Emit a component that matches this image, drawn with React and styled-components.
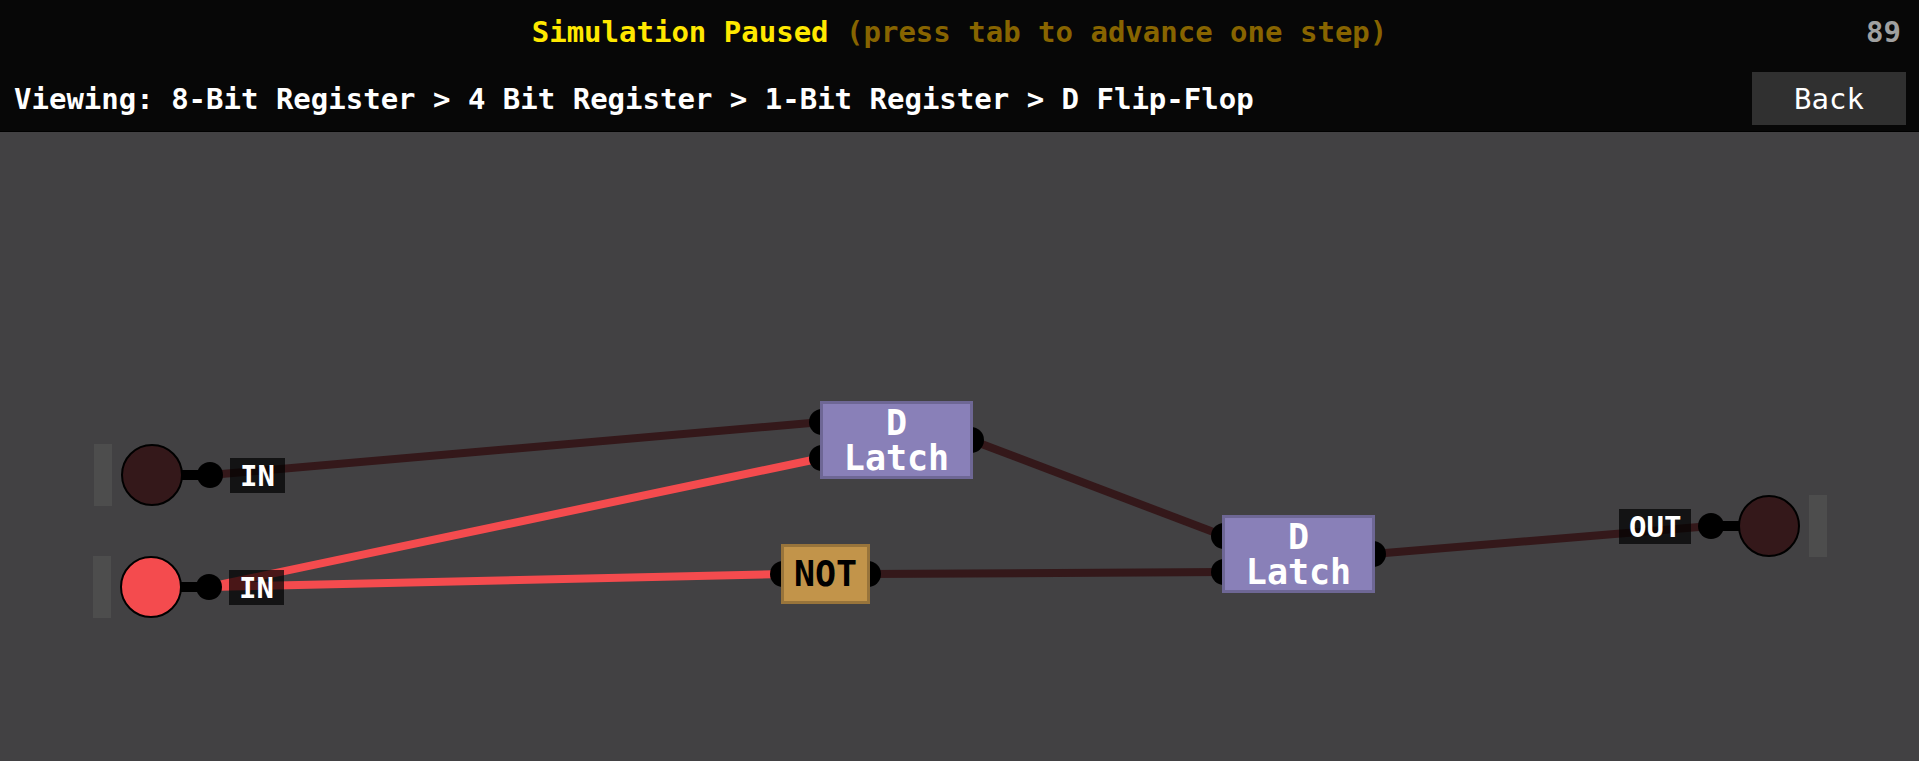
import React from "react";
import styled, { createGlobalStyle } from "styled-components";

const GlobalStyle = createGlobalStyle`
  *, *::before, *::after { box-sizing: border-box; }
  body {
    margin: 0;
    background: #424143;
    color: #ffffff;
    font: bold 29px/36px "DejaVu Sans Mono", "Liberation Mono", monospace;
  }
`;

const Page = styled.div`
  display: flex;
  flex-direction: column;
  min-height: 100vh;
`;

const Header = styled.header`
  background: #070707;
  border-bottom: 1px solid #000000;
`;

const StatusRow = styled.div`
  display: grid;
  grid-template-columns: 1fr auto 1fr;
  align-items: center;
  height: 64px;
  padding: 0 18px;
`;

const Status = styled.p`
  grid-column: 2;
  margin: 0;
  color: #ffe800;
  white-space: nowrap;
`;

const Hint = styled.span`
  color: #876400;
`;

const StepCount = styled.output`
  justify-self: end;
  color: #a0a0a0;
`;

const ViewRow = styled.nav`
  display: flex;
  align-items: center;
  justify-content: space-between;
  padding: 8px 13px 6px 14px;
`;

const Trail = styled.p`
  margin: 0;
  white-space: nowrap;
`;

const BackButton = styled.button`
  width: 154px;
  height: 53px;
  padding: 0;
  border: 0;
  background: #303030;
  color: #ffffff;
  font: inherit;
  font-weight: normal;
  cursor: pointer;
`;

const Canvas = styled.main`
  position: relative;
  flex: 1;
  min-height: 560px;
  overflow: hidden;
`;

const Wires = styled.svg`
  position: absolute;
  inset: 0;
  width: 100%;
  height: 100%;
  stroke-width: 8px;
`;

/* A part of the circuit, placed freely on the canvas. */
const Node = styled.div`
  position: absolute;
  left: ${(p) => p.$x}px;
  top: ${(p) => p.$y}px;
  display: flex;
  flex-direction: ${(p) => (p.$flip ? "row-reverse" : "row")};
  align-items: center;
`;

const Handle = styled.div`
  width: 18px;
  height: 62px;
  background: #4d4d4d;
`;

const Lamp = styled.div`
  width: 62px;
  height: 62px;
  margin: 0 9px;
  border: 2px solid #000000;
  border-radius: 50%;
  background: ${(p) => (p.$on ? "#f44b4e" : "#34181a")};
`;

const Stem = styled.div`
  width: 25px;
  height: 10px;
  margin: 0 -10px;
  background: #000000;
`;

const Pin = styled.div`
  width: 26px;
  height: 26px;
  border-radius: 50%;
  background: #000000;
`;

const Tag = styled.div`
  height: 35px;
  margin: 0 7px;
  padding: 0 10px;
  background: rgba(0, 0, 0, 0.7);
  line-height: 37px;
`;

const PinColumn = styled.div`
  display: flex;
  flex-direction: column;
  gap: 10px;
  ${(p) => (p.$side === "left" ? "margin-right: -15px;" : "margin-left: -15px;")}
`;

const Gate = styled.div`
  z-index: 1;
  display: flex;
  align-items: center;
  justify-content: center;
  width: ${(p) => p.$w}px;
  height: ${(p) => p.$h}px;
  padding-top: 1px;
  border: 3px solid ${(p) => p.$edge};
  background: ${(p) => p.$fill};
  color: ${(p) => p.$ink};
  font-size: 35px;
  line-height: 35px;
  text-align: center;
  white-space: pre-line;
`;

const ON = "#f44b4e";
const OFF = "#34181a";

const wires = [
  { from: [210, 343], to: [822, 290], color: OFF },
  { from: [209, 455], to: [822, 326], color: ON },
  { from: [209, 455], to: [783, 442], color: ON },
  { from: [971, 308], to: [1224, 404], color: OFF },
  { from: [867, 442], to: [1224, 440], color: OFF },
  { from: [1373, 422], to: [1711, 394], color: OFF },
];

const terminals = [
  { name: "IN", x: 94, y: 312 },
  { name: "IN", on: true, x: 93, y: 424 },
  { name: "OUT", output: true, x: 1612, y: 363 },
];

const latch = { name: "D\nLatch", w: 153, h: 78, fill: "#8980b8", edge: "#6e6795", ink: "#ffffff", inputs: 2 };
const not = { name: "NOT", w: 89, h: 60, fill: "#c2944a", edge: "#98743b", ink: "#000000", inputs: 1 };

const gates = [
  { ...latch, x: 809, y: 269 },
  { ...latch, x: 1211, y: 383 },
  { ...not, x: 770, y: 412 },
];

function Terminal({ name, on, output, x, y }) {
  return (
    <Node $x={x} $y={y} $flip={output}>
      <Handle />
      <Lamp $on={on} />
      <Stem />
      <Pin />
      <Tag>{name}</Tag>
    </Node>
  );
}

function Chip({ name, x, y, w, h, fill, edge, ink, inputs }) {
  return (
    <Node $x={x} $y={y}>
      <PinColumn $side="left">
        {Array.from({ length: inputs }, (_, i) => (
          <Pin key={i} />
        ))}
      </PinColumn>
      <Gate $w={w} $h={h} $fill={fill} $edge={edge} $ink={ink}>{name}</Gate>
      <PinColumn $side="right">
        <Pin />
      </PinColumn>
    </Node>
  );
}

export default function App() {
  return (
    <Page>
      <GlobalStyle />
      <Header>
        <StatusRow>
          <Status>
            Simulation Paused <Hint>(press tab to advance one step)</Hint>
          </Status>
          <StepCount>89</StepCount>
        </StatusRow>
        <ViewRow>
          <Trail>Viewing: 8-Bit Register &gt; 4 Bit Register &gt; 1-Bit Register &gt; D Flip-Flop</Trail>
          <BackButton type="button">Back</BackButton>
        </ViewRow>
      </Header>
      <Canvas>
        <Wires aria-hidden="true">
          {wires.map(({ from, to, color }) => (
            <line key={`${from}-${to}`} x1={from[0]} y1={from[1]} x2={to[0]} y2={to[1]} stroke={color} />
          ))}
        </Wires>
        {gates.map((gate) => (
          <Chip key={`${gate.x}-${gate.y}`} {...gate} />
        ))}
        {terminals.map((terminal) => (
          <Terminal key={`${terminal.x}-${terminal.y}`} {...terminal} />
        ))}
      </Canvas>
    </Page>
  );
}
